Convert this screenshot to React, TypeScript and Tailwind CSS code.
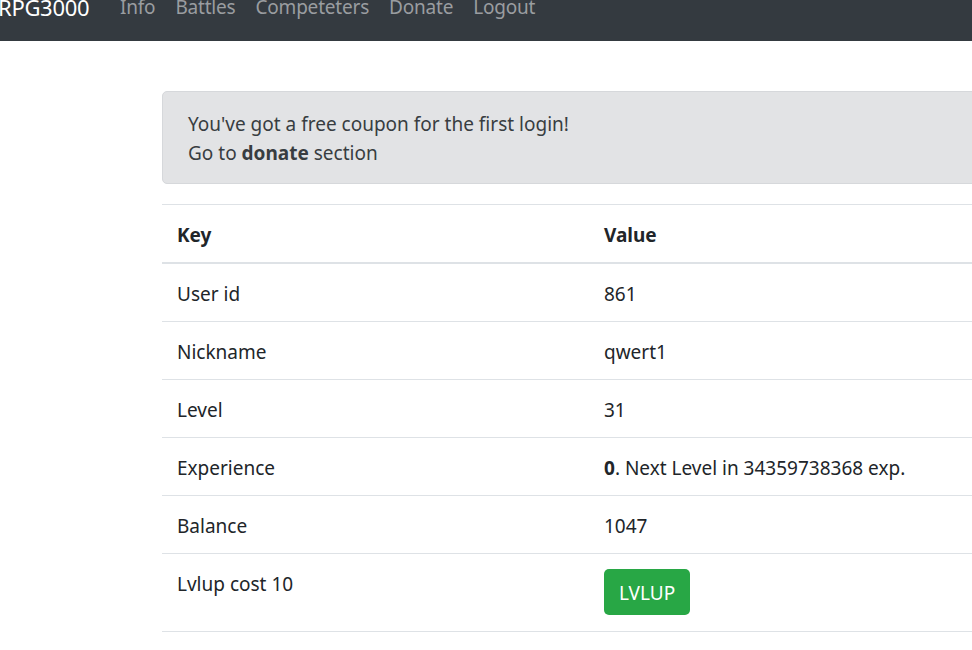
import React from "react";

const rows: { key: string; value: React.ReactNode }[] = [
  { key: "User id", value: "861" },
  { key: "Nickname", value: "qwert1" },
  { key: "Level", value: "31" },
  {
    key: "Experience",
    value: (
      <>
        <b className="font-bold">0</b>. Next Level in 34359738368 exp.
      </>
    ),
  },
  { key: "Balance", value: "1047" },
];

const App: React.FC = () => {
  return (
    <div
      className="w-[972px] h-[650px] overflow-hidden bg-white text-[#212529] text-[19px] leading-[29px]"
      style={{ fontFamily: '"Noto Sans", "Open Sans", sans-serif' }}
    >
      <nav className="-mt-[26px] h-[67px] bg-[#343a40] flex items-center -ml-[2px]">
        <a className="w-[122px] shrink-0 text-white text-[22px] leading-[35px] tracking-[-0.3px]">RPG3000</a>
        <ul className="flex gap-[20px] text-[#9a9da0] tracking-[-0.2px]">
          <li>Info</li>
          <li>Battles</li>
          <li>Competeters</li>
          <li>Donate</li>
          <li>Logout</li>
        </ul>
      </nav>

      <main className="ml-[162px] mt-[50px] w-[1000px]">
        <div className="bg-[#e2e3e5] border border-[#d6d8db] rounded-[5px] text-[#383d41] px-[25px] pt-[18px] h-[93px]">
          <p>You've got a free coupon for the first login!</p>
          <p>
            Go to <b className="font-bold">donate</b> section
          </p>
        </div>

        <table className="mt-[20px] w-full border-collapse">
          <thead>
            <tr className="border-t border-[#dee2e6] border-b-2">
              <th className="w-[427px] text-left font-bold px-[15px] pt-[16px] pb-[12px]">Key</th>
              <th className="text-left font-bold px-[15px] pt-[16px] pb-[12px]">Value</th>
            </tr>
          </thead>
          <tbody>
            {rows.map((r) => (
              <tr key={r.key} className="border-t border-[#dee2e6]">
                <td className="px-[15px] pt-[16px] pb-[12px]">{r.key}</td>
                <td className="px-[15px] pt-[16px] pb-[12px]">{r.value}</td>
              </tr>
            ))}
            <tr className="border-t border-b border-[#dee2e6]">
              <td className="px-[15px] pt-[16px] pb-[32px] align-top">Lvlup cost 10</td>
              <td className="px-[15px] pt-[15px] pb-[14px] align-top">
                <button className="bg-[#28a745] text-white rounded-[5px] px-[15px] pt-[9px] pb-[7px] leading-[30px]">
                  LVLUP
                </button>
              </td>
            </tr>
          </tbody>
        </table>
      </main>
    </div>
  );
};

export default App;
